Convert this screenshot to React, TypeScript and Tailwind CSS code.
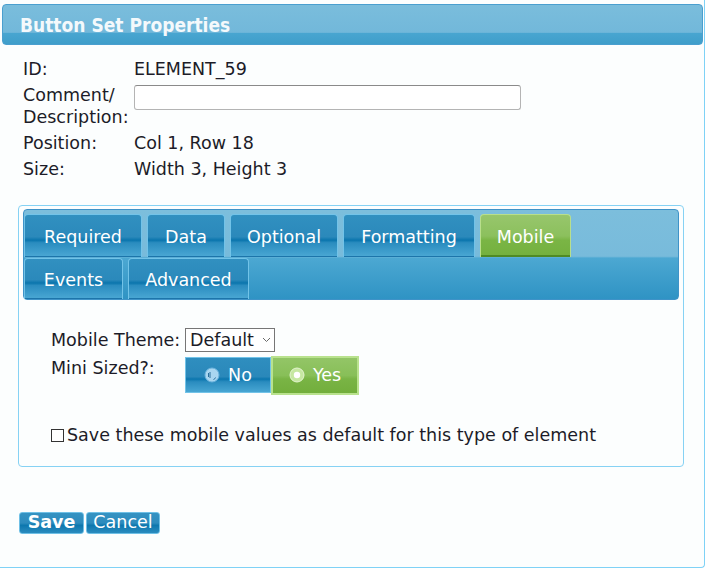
import { useState } from "react";

const body = "font-['DejaVu_Sans',Verdana,sans-serif]";

const blueTab =
  "bg-[linear-gradient(to_bottom,#3190c0_0%,#2b89bb_52%,#0a75ad_60%,#2a8cbf_66%,#4ba8d4_100%)] border border-b-0 border-[#72c3e8] shadow-[inset_0_-1px_0_#1d75aa]";
const greenTab =
  "bg-[linear-gradient(to_bottom,#97c66c_0%,#8cc05d_50%,#7ab545_60%,#74b03e_100%)] border border-b-0 border-[#b8df8c] shadow-[inset_0_-2px_0_#4f8a24]";

type Tab = { label: string; w: string; active?: boolean };

const row1: Tab[] = [
  { label: "Required", w: "w-[118px]" },
  { label: "Data", w: "w-[78px]" },
  { label: "Optional", w: "w-[108px]" },
  { label: "Formatting", w: "w-[132px]" },
  { label: "Mobile", w: "w-[91px]", active: true },
];
const row2: Tab[] = [
  { label: "Events", w: "w-[99px]" },
  { label: "Advanced", w: "w-[121px]" },
];

function TabButton({ tab }: { tab: Tab }) {
  return (
    <div
      className={`${tab.w} h-full flex items-center justify-center pt-[2px] rounded-t-[4px] text-white text-[17.5px] ${
        tab.active ? greenTab : blueTab
      }`}
    >
      {tab.label}
    </div>
  );
}

function NoIcon() {
  return (
    <svg width="16" height="16" viewBox="0 0 16 16">
      <circle cx="8" cy="8" r="7" fill="#a9d6f0" stroke="#6cb4de" strokeWidth="1" />
      <path d="M4.5 6v4M6 5v6M11.5 10.5a3 3 0 0 1-2 2" stroke="#2a6f9c" strokeWidth="1" fill="none" />
    </svg>
  );
}

function YesIcon() {
  return (
    <svg width="16" height="16" viewBox="0 0 16 16">
      <circle cx="8" cy="8" r="7" fill="#c6e8a2" stroke="#e4f4d0" strokeWidth="1" />
      <circle cx="8" cy="8" r="3.2" fill="#ffffff" />
    </svg>
  );
}

export default function App() {
  const [mini, setMini] = useState(true);
  const [saveDefault, setSaveDefault] = useState(false);

  return (
    <div className={`${body} w-[710px] h-[571px] bg-white text-[#1c1c28] overflow-hidden`}>
      <div className="-ml-px w-[706px] h-[568px] border border-t-0 border-[#7fd2f6] rounded-br-[4px] bg-[#fcfefe] pt-[4px] pl-[2px] pr-[2px]">
        {/* title bar */}
        <div className="w-[701px] h-[41px] rounded-[4px] border border-[#4a9fcf] bg-[linear-gradient(to_bottom,#7abddc_0%,#72b8da_70%,#48a5d0_73%,#3f9eca_100%)] flex items-center pl-[17px] pt-[1px]">
          <span className="font-['DejaVu_Sans_Condensed','DejaVu_Sans',sans-serif] font-bold text-[19px] text-[#f4f9fc]">
            Button Set Properties
          </span>
        </div>

        {/* properties */}
        <div className="grid grid-cols-[111px_1fr] pl-[21px] mt-[11px] text-[17.5px]">
          <div className="h-[26px] leading-[26px]">ID:</div>
          <div className="h-[26px] leading-[26px]">ELEMENT_59</div>
          <div className="h-[48px] leading-[22px] pt-[2px]">
            Comment/
            <br />
            Description:
          </div>
          <div className="h-[48px] pt-[2px]">
            <input
              type="text"
              className="w-[387px] h-[25px] rounded-[3px] border border-[#b4b4b4] border-t-[#8a8a8a] bg-white outline-none"
            />
          </div>
          <div className="h-[26px] leading-[26px]">Position:</div>
          <div className="h-[26px] leading-[26px]">Col 1, Row 18</div>
          <div className="h-[26px] leading-[26px]">Size:</div>
          <div className="h-[26px] leading-[26px]">Width 3, Height 3</div>
        </div>

        {/* tab panel */}
        <div className="ml-[16px] mt-[23px] w-[666px] h-[262px] border border-[#86d2f4] rounded-[4px] px-[4px] pt-[3px]">
          <div className="h-[91px] rounded-[4px] border border-[#3f93c8] bg-[linear-gradient(to_bottom,#7cbedc_0%,#78bbdb_52%,#4ca8d2_54%,#2f93c4_100%)] pt-[4px] flex flex-col">
            <div className="flex gap-[5px] h-[43px]">
              {row1.map((t) => (
                <TabButton key={t.label} tab={t} />
              ))}
            </div>
            <div className="flex gap-[5px] h-[42px] mt-[1px]">
              {row2.map((t) => (
                <TabButton key={t.label} tab={t} />
              ))}
            </div>
          </div>

          <div className="pl-[28px] pt-[27px] text-[17.5px]">
            <div className="flex items-center h-[26px]">
              <span className="w-[134px]">Mobile Theme:</span>
              <div className="w-[90px] h-[24px] border border-[#767676] bg-white flex items-center pl-[4px] pr-[3px] justify-between">
                <span>Default</span>
                <svg width="9" height="6" viewBox="0 0 9 6">
                  <path d="M1 1l3.5 3.5L8 1" stroke="#6a6a6a" strokeWidth="1" fill="none" />
                </svg>
              </div>
            </div>
            <div className="flex items-start mt-[2px]">
              <span className="w-[134px] h-[26px] leading-[26px]">Mini Sized?:</span>
              <div className="flex items-center h-[40px]">
                <button
                  type="button"
                  onClick={() => setMini(false)}
                  className={`w-[86px] h-[36px] flex items-center justify-center gap-[8px] text-white text-[17.5px] ${
                    mini
                      ? "bg-[linear-gradient(to_bottom,#2f8ebf_0%,#2a88ba_55%,#0b76ae_62%,#2a8cbf_70%,#48a6d3_100%)] border border-[#72c3e8]"
                      : greenTab
                  }`}
                >
                  <NoIcon />
                  No
                </button>
                <button
                  type="button"
                  onClick={() => setMini(true)}
                  className={`w-[88px] h-[39px] flex items-center justify-center gap-[8px] text-white text-[17.5px] ${
                    mini
                      ? "bg-[linear-gradient(to_bottom,#93c567_0%,#88bf58_50%,#79b445_60%,#72ae3c_100%)] border-2 border-[#b9e28e]"
                      : "bg-[#2f8ebf] border border-[#72c3e8]"
                  }`}
                >
                  <YesIcon />
                  Yes
                </button>
              </div>
            </div>
            <label className="flex items-center mt-[27px] h-[26px]">
              <span
                onClick={() => setSaveDefault(!saveDefault)}
                className="w-[13px] h-[13px] border border-[#333] bg-white mr-[3px] flex items-center justify-center text-[10px] leading-none"
              >
                {saveDefault ? "✓" : ""}
              </span>
              Save these mobile values as default for this type of element
            </label>
          </div>
        </div>

        {/* footer buttons */}
        <div className="flex gap-[2px] ml-[17px] mt-[45px]">
          <button
            type="button"
            className="w-[65px] h-[22px] rounded-[3px] border border-[#6fc0e6] bg-[linear-gradient(to_bottom,#3593c2_0%,#2d8bbd_50%,#0d77ae_62%,#2b8cbf_100%)] text-white font-bold text-[17.5px] leading-none"
          >
            Save
          </button>
          <button
            type="button"
            className="w-[74px] h-[22px] rounded-[3px] border border-[#6fc0e6] bg-[linear-gradient(to_bottom,#3593c2_0%,#2d8bbd_50%,#0d77ae_62%,#2b8cbf_100%)] text-white text-[17.5px] leading-none"
          >
            Cancel
          </button>
        </div>
      </div>
    </div>
  );
}
